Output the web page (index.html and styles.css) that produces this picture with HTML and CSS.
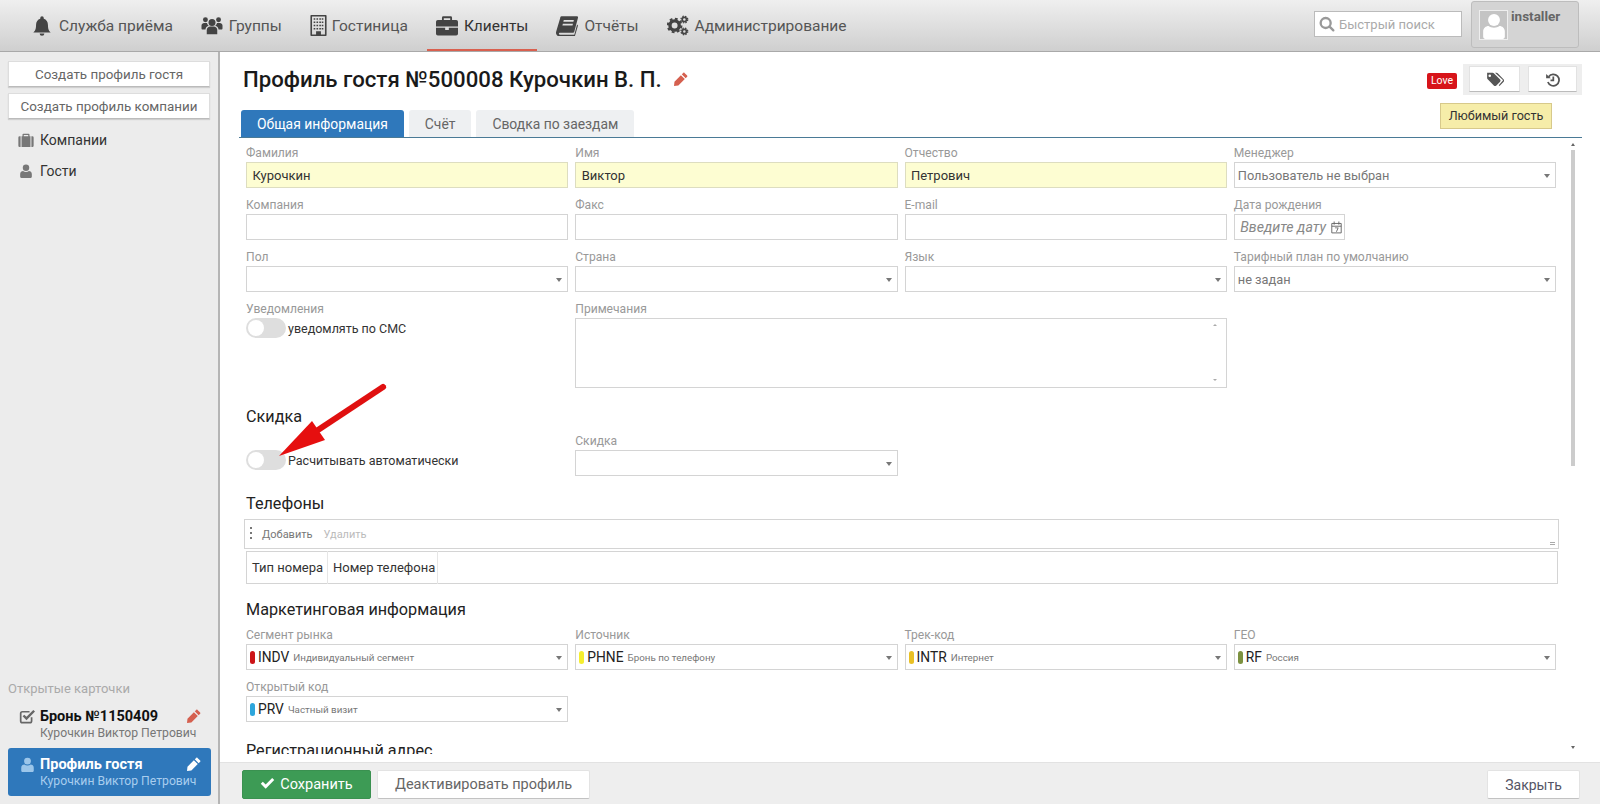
FILE: index.html
```html
<!DOCTYPE html>
<html lang="ru">
<head>
<meta charset="utf-8">
<title>Профиль гостя</title>
<link rel="stylesheet" href="styles.css">
</head>
<body>
<svg class="sprite" width="0" height="0">
  <defs>
    <symbol id="i-bell" viewBox="0 0 24 24"><path d="M12 1.500a2 2 0 0 1 2 2v.9c3 .9 4.800 3.600 4.800 6.900 0 5 1.200 6.800 3.200 8.700H2c2-1.900 3.200-3.700 3.200-8.700 0-3.300 1.800-6 4.800-6.900v-.9a2 2 0 0 1 2-2zM9.300 21h5.400a2.700 2.700 0 0 1-5.400 0z"/></symbol>
    <symbol id="i-users" viewBox="0 0 24 24"><circle cx="12" cy="8.500" r="4"/><circle cx="4.500" cy="5.500" r="2.800"/><circle cx="19.500" cy="5.500" r="2.800"/><path d="M6 22v-5c0-2.500 2-4 4-4h4c2 0 4 1.500 4 4v5z"/><path d="M0 15v-3c0-2 1.500-3 3-3h3.300c.4 1.500 1.200 2.700 2.200 3.400C6 13 4.700 14.600 4.500 16.500H1c-.6 0-1-.6-1-1.500zM24 15v-3c0-2-1.500-3-3-3h-3.300c-.4 1.500-1.200 2.700-2.200 3.400 2.500.6 3.800 2.200 4 4.100H23c.6 0 1-.6 1-1.500z"/></symbol>
    <symbol id="i-building" viewBox="0 0 20 26"><path fill-rule="evenodd" d="M1 0h18a1 1 0 0 1 1 1v24a1 1 0 0 1-1 1H1a1 1 0 0 1-1-1V1a1 1 0 0 1 1-1zm1 2v22h5v-4h6v4h5V2z"/><path d="M4 4h2v2H4zM7.500 4h2v2h-2zM11 4h2v2h-2zM14 4h2v2h-2zM4 8h2v2H4zM7.500 8h2v2h-2zM11 8h2v2h-2zM14 8h2v2h-2zM4 12h2v2H4zM7.500 12h2v2h-2zM11 12h2v2h-2zM14 12h2v2h-2zM4 16h2v2H4zM7.500 16h2v2h-2zM11 16h2v2h-2zM14 16h2v2h-2z"/></symbol>
    <symbol id="i-case" viewBox="0 0 24 22"><path fill-rule="evenodd" d="M8 1h8a1.500 1.500 0 0 1 1.500 1.500V5H22a2 2 0 0 1 2 2v5H0V7a2 2 0 0 1 2-2h4.500V2.500A1.500 1.500 0 0 1 8 1zm.5 2v2h7V3z"/><path d="M0 13.500h10V16h4v-2.500h10V20a2 2 0 0 1-2 2H2a2 2 0 0 1-2-2z"/></symbol>
    <symbol id="i-book" viewBox="0 0 24 22"><path fill-rule="evenodd" d="M6 1h17c1 0 1.200.8 1 1.500l-4 15c-.3 1.200-1 1.500-2 1.500H4.500c-1 0-1.500.6-1.300 1.200.1.400.5.800 1.300.800H20l3-11 1 1-3.500 12H4C1.500 23 0 21 0 19c0-.6.100-1.200.3-1.800L4.500 3C4.800 1.800 5 1 6 1zm2.500 4l-.5 2h11l.5-2zm-1 4l-.5 2h11l.5-2z"/></symbol>
    <symbol id="i-cogs" viewBox="0 0 26 24"><circle cx="9" cy="12" r="5.500" fill="none" stroke="currentColor" stroke-width="4"/><circle cx="9" cy="12" r="8" fill="none" stroke="currentColor" stroke-width="2.500" stroke-dasharray="3.300 3"/><circle cx="20.500" cy="5" r="2.500" fill="none" stroke="currentColor" stroke-width="2"/><circle cx="20.500" cy="5" r="4" fill="none" stroke="currentColor" stroke-width="1.500" stroke-dasharray="1.700 1.500"/><circle cx="20.500" cy="19" r="2.500" fill="none" stroke="currentColor" stroke-width="2"/><circle cx="20.500" cy="19" r="4" fill="none" stroke="currentColor" stroke-width="1.500" stroke-dasharray="1.700 1.500"/></symbol>
    <symbol id="i-search" viewBox="0 0 24 24"><path fill="none" stroke="currentColor" stroke-width="3.500" stroke-linecap="round" d="M10 3a7.500 7.500 0 1 1 0 15 7.500 7.500 0 0 1 0-15zM15.500 15.500l6 6"/></symbol>
    <symbol id="i-user" viewBox="0 0 20 24"><circle cx="10" cy="6.500" r="5.500"/><path d="M0 22v-5c0-3 2.500-5 5-5 1.300 1 3 1.600 5 1.600s3.700-.6 5-1.600c2.500 0 5 2 5 5v5c0 1-.8 2-2 2H2c-1.200 0-2-1-2-2z"/></symbol>
    <symbol id="i-pencil" viewBox="0 0 24 24"><path d="M18 1.500l4.500 4.500c.7.700.7 1.500 0 2.200L20 10.700 13.300 4 15.800 1.500c.7-.7 1.500-.7 2.200 0zM11.800 5.500l6.700 6.700L7.500 23.200 0 24l.8-7.500z"/></symbol>
    <symbol id="i-tags" viewBox="0 0 24 20"><path d="M1.500 1h7.300c.6 0 1.200.3 1.600.7l8.400 8.400c.8.800.8 2 0 2.800l-5.300 5.300c-.8.800-2 .8-2.800 0L2.300 9.800C1.800 9.300 1.500 8.700 1.500 8zm3.500 2.200a1.700 1.700 0 1 0 0 3.400 1.700 1.700 0 0 0 0-3.400z" fill-rule="evenodd"/><path d="M12 1h2c.6 0 1.200.3 1.600.7l8 8.400c.6.800.6 2 0 2.800L18 18.500l-1-1 5.300-5.800c.4-.5.300-1-.1-1.500z"/></symbol>
    <symbol id="i-history" viewBox="0 0 24 24"><path fill="none" stroke="currentColor" stroke-width="2.800" d="M5 7.500A9.200 9.200 0 1 1 3.800 16M12.500 7v6.500H8"/><path d="M1 3l7.500 7H1z"/></symbol>
    <symbol id="i-check" viewBox="0 0 24 20"><path d="M9 19.500L.8 11.300l3.400-3.400L9 12.700 19.800 1.800l3.400 3.400z"/></symbol>
    <symbol id="i-checkbox" viewBox="0 0 24 22"><path fill="none" stroke="currentColor" stroke-width="2.500" d="M18 12v5.500c0 1.500-1 2.500-2.500 2.500h-11C3 20 2 19 2 17.500v-11C2 5 3 4 4.500 4H15"/><path d="M10.500 16.500L4.800 10.800l2.500-2.500 3.200 3.200L20.500 1.300 23 3.800z"/></symbol>
    <symbol id="i-briefcase-line" viewBox="0 0 24 22"><path d="M8 1h8a1.500 1.500 0 0 1 1.500 1.500V5H19v17H5V5h1.500V2.500A1.500 1.500 0 0 1 8 1zm.5 2v2h7V3zM3.500 5v17H2a2 2 0 0 1-2-2V7a2 2 0 0 1 2-2zM20.500 5H22a2 2 0 0 1 2 2v13a2 2 0 0 1-2 2h-1.500z" fill-rule="evenodd"/></symbol>
    <symbol id="i-calendar" viewBox="0 0 14 16"><path fill="none" stroke="currentColor" stroke-width="1.200" d="M1 3.500h12v12H1zM1 7h12M4 1v4M10 1v4"/><path d="M5 8.500h4.500v1L7.500 14h-1.200l2-4.300H5z"/></symbol>
  </defs>
</svg>

<header class="topbar">
  <nav class="nav">
    <a class="nav-item"><svg class="nav-icon"><use href="#i-bell"/></svg>Служба приёма</a>
    <a class="nav-item"><svg class="nav-icon"><use href="#i-users"/></svg>Группы</a>
    <a class="nav-item"><svg class="nav-icon nav-icon-narrow"><use href="#i-building"/></svg>Гостиница</a>
    <a class="nav-item is-active"><svg class="nav-icon"><use href="#i-case"/></svg>Клиенты</a>
    <a class="nav-item"><svg class="nav-icon"><use href="#i-book"/></svg>Отчёты</a>
    <a class="nav-item"><svg class="nav-icon"><use href="#i-cogs"/></svg>Администрирование</a>
  </nav>
  <div class="quick-search"><svg class="search-icon"><use href="#i-search"/></svg>Быстрый поиск</div>
  <div class="user-box">
    <div class="avatar"><svg class="avatar-icon"><use href="#i-user"/></svg></div>
    <span class="user-name">installer</span>
  </div>
</header>

<div class="workspace">
  <aside class="sidebar">
    <button class="side-btn">Создать профиль гостя</button>
    <button class="side-btn">Создать профиль компании</button>
    <ul class="side-menu">
      <li class="side-link"><svg class="side-icon"><use href="#i-briefcase-line"/></svg>Компании</li>
      <li class="side-link"><svg class="side-icon"><use href="#i-user"/></svg>Гости</li>
    </ul>
    <div class="open-title">Открытые карточки</div>
    <div class="card">
      <svg class="card-icon"><use href="#i-checkbox"/></svg>
      <div class="card-body">
        <div class="card-name">Бронь №1150409</div>
        <div class="card-sub">Курочкин Виктор Петрович</div>
      </div>
      <svg class="card-edit"><use href="#i-pencil"/></svg>
    </div>
    <div class="card is-current">
      <svg class="card-icon"><use href="#i-user"/></svg>
      <div class="card-body">
        <div class="card-name">Профиль гостя</div>
        <div class="card-sub">Курочкин Виктор Петрович</div>
      </div>
      <svg class="card-edit"><use href="#i-pencil"/></svg>
    </div>
  </aside>

  <main class="main">
    <div class="head">
      <h1 class="title">Профиль гостя №500008 Курочкин В. П.<svg class="title-edit"><use href="#i-pencil"/></svg></h1>
      <div class="head-tools">
        <span class="love">Love</span>
        <div class="tool-group">
          <button class="tool-btn tool-tags"><svg class="tool-icon"><use href="#i-tags"/></svg></button>
          <button class="tool-btn tool-hist"><svg class="tool-icon hist"><use href="#i-history"/></svg></button>
        </div>
      </div>
      <div class="tooltip">Любимый гость</div>
    </div>

    <div class="tabs">
      <a class="tab is-active">Общая информация</a>
      <a class="tab">Счёт</a>
      <a class="tab">Сводка по заездам</a>
    </div>

    <div class="scroll">
      <div class="form">
        <div class="grid">
          <div class="field"><label class="lbl">Фамилия</label><div class="ctl req">Курочкин</div></div>
          <div class="field"><label class="lbl">Имя</label><div class="ctl req">Виктор</div></div>
          <div class="field"><label class="lbl">Отчество</label><div class="ctl req">Петрович</div></div>
          <div class="field"><label class="lbl">Менеджер</label><div class="ctl sel muted">Пользователь не выбран<i class="caret"></i></div></div>

          <div class="field"><label class="lbl">Компания</label><div class="ctl"></div></div>
          <div class="field"><label class="lbl">Факс</label><div class="ctl"></div></div>
          <div class="field"><label class="lbl">E-mail</label><div class="ctl"></div></div>
          <div class="field"><label class="lbl">Дата рождения</label><div class="ctl date"><em class="ph">Введите дату</em><svg class="cal"><use href="#i-calendar"/></svg></div></div>

          <div class="field"><label class="lbl">Пол</label><div class="ctl sel"><i class="caret"></i></div></div>
          <div class="field"><label class="lbl">Страна</label><div class="ctl sel"><i class="caret"></i></div></div>
          <div class="field"><label class="lbl">Язык</label><div class="ctl sel"><i class="caret"></i></div></div>
          <div class="field"><label class="lbl">Тарифный план по умолчанию</label><div class="ctl sel muted">не задан<i class="caret"></i></div></div>

          <div class="field"><label class="lbl">Уведомления</label><div class="switch-row"><span class="switch"></span>уведомлять по СМС</div></div>
          <div class="field span2"><label class="lbl">Примечания</label><div class="ctl area"><i class="tick up"></i><i class="tick down"></i></div></div>
        </div>

        <h2 class="sect sect-first">Скидка</h2>
        <div class="grid">
          <div class="field"><div class="switch-row at-input"><span class="switch"></span>Расчитывать автоматически</div></div>
          <div class="field"><label class="lbl">Скидка</label><div class="ctl sel"><i class="caret"></i></div></div>
        </div>

        <h2 class="sect sect-phones">Телефоны</h2>
        <div class="toolbar">
          <span class="grip"></span>
          <span class="tb-item">Добавить</span>
          <span class="tb-item off">Удалить</span>
          <span class="tb-end"></span>
        </div>
        <table class="phones">
          <tr><th class="col-a">Тип номера</th><th class="col-b">Номер телефона</th><th></th></tr>
        </table>

        <h2 class="sect sect-mkt">Маркетинговая информация</h2>
        <div class="grid">
          <div class="field"><label class="lbl">Сегмент рынка</label><div class="ctl sel code"><b class="pill c-red"></b><span class="cd">INDV</span><span class="desc">Индивидуальный сегмент</span><i class="caret"></i></div></div>
          <div class="field"><label class="lbl">Источник</label><div class="ctl sel code"><b class="pill c-yel"></b><span class="cd">PHNE</span><span class="desc">Бронь по телефону</span><i class="caret"></i></div></div>
          <div class="field"><label class="lbl">Трек-код</label><div class="ctl sel code"><b class="pill c-gold"></b><span class="cd">INTR</span><span class="desc">Интернет</span><i class="caret"></i></div></div>
          <div class="field"><label class="lbl">ГЕО</label><div class="ctl sel code"><b class="pill c-olive"></b><span class="cd">RF</span><span class="desc">Россия</span><i class="caret"></i></div></div>
          <div class="field"><label class="lbl">Открытый код</label><div class="ctl sel code"><b class="pill c-blue"></b><span class="cd">PRV</span><span class="desc">Частный визит</span><i class="caret"></i></div></div>
        </div>

        <h2 class="sect sect-addr">Регистрационный адрес</h2>
      </div>
      <div class="rail">
        <i class="rail-up"></i>
        <span class="rail-thumb"></span>
        <i class="rail-down"></i>
      </div>
    </div>

    <footer class="footer">
      <button class="btn btn-save"><svg class="btn-check"><use href="#i-check"/></svg>Сохранить</button>
      <button class="btn">Деактивировать профиль</button>
      <button class="btn btn-close">Закрыть</button>
    </footer>

    <svg class="pointer" width="120" height="90" viewBox="0 0 120 90">
      <path d="M106 4L41 47" stroke="#e01010" stroke-width="6" stroke-linecap="round" fill="none"/>
      <path d="M2 73L35 38 48 57z" fill="#e60f0f"/>
    </svg>
  </main>
</div>
</body>
</html>
```

FILE: styles.css
```css
* { box-sizing: border-box; }
html, body { margin: 0; height: 100%; }
body {
  display: flex;
  flex-direction: column;
  height: 804px;
  overflow: hidden;
  font-family: Roboto, "Noto Sans", sans-serif;
  font-size: 14px;
  color: #333;
  background: #fff;
}
.sprite { position: absolute; }
svg { fill: currentColor; }

/* top bar */
.topbar {
  flex: none;
  display: flex;
  align-items: flex-start;
  height: 52px;
  padding-right: 21px;
  background: linear-gradient(#efefef, #cfcfcf);
  border-bottom: 1px solid #a9a9a9;
}
.nav { display: flex; flex: 1; padding-left: 22px; height: 51px; }
.nav-item {
  display: flex;
  align-items: center;
  height: 51px;
  padding: 0 9px;
  margin-right: 10px;
  font-size: 15.500px;
  color: #555;
  white-space: nowrap;
}
.nav-item.is-active { color: #333; border-bottom: 2px solid #d9604f; padding-top: 2px; }
.nav-icon { width: 22px; height: 21px; margin-right: 6px; color: #444; }
.nav-icon-narrow { width: 17px; margin-right: 5px; }
.quick-search {
  display: flex;
  align-items: center;
  width: 148px;
  height: 26px;
  margin-top: 11px;
  padding-left: 4px;
  background: #fff;
  border: 1px solid #bbb;
  font-size: 13px;
  color: #aaa;
}
.search-icon { width: 16px; height: 16px; margin-right: 4px; color: #999; }
.user-box {
  display: flex;
  align-items: flex-start;
  width: 108px;
  height: 47px;
  margin: 1px 0 0 9px;
  padding: 8px 0 0 7px;
  background: #d4d4d4;
  border: 1px solid #bdbdbd;
  border-radius: 3px;
}
.avatar {
  display: flex;
  justify-content: center;
  align-items: flex-end;
  width: 29px;
  height: 30px;
  background: #c4c4c4;
  border: 1px solid #eee;
  overflow: hidden;
}
.avatar-icon { width: 24px; height: 26px; color: #fff; }
.user-name { margin-left: 3px; font-weight: 700; font-size: 13.500px; color: #666; line-height: 13px; }

.workspace { flex: 1; display: flex; min-height: 0; position: relative; }

/* sidebar */
.sidebar {
  flex: none;
  display: flex;
  flex-direction: column;
  width: 220px;
  padding: 9px 8px 8px 8px;
  background: #ececec;
  border-right: 2px solid #b5b5b5;
}
.side-btn {
  display: block;
  width: 202px;
  height: 26px;
  margin-bottom: 6px;
  padding: 0;
  font: inherit;
  font-size: 13.400px;
  color: #666;
  background: #fff;
  border: 1px solid #ddd;
  border-bottom-color: #bbb;
  box-shadow: 0 1px 1px rgba(0,0,0,.12);
}
.side-menu { list-style: none; margin: -1px 0 auto; padding: 0; }
.side-link { display: flex; align-items: center; height: 31px; color: #333; }
.side-icon { width: 16px; height: 14px; margin: 0 6px 0 10px; color: #777; }
.open-title { margin-bottom: 2px; font-size: 13px; color: #aaa; line-height: 18px; }
.card {
  display: flex;
  align-items: flex-start;
  height: 48px;
  width: 203px;
  padding: 8px 10px 0 11px;
  border-radius: 3px;
}
.card-icon { flex: none; width: 17px; height: 15px; margin: 1px 4px 0 0; color: #666; }
.card-body { flex: 1; min-width: 0; }
.card-name { font-weight: 700; font-size: 14.500px; line-height: 17px; color: #111; white-space: nowrap; }
.card-sub { font-size: 12.200px; line-height: 17px; color: #777; white-space: nowrap; }
.card-edit { flex: none; width: 14px; height: 14px; margin-top: 1px; color: #d5604f; }
.card.is-current { background: #2f78bb; }
.is-current .card-icon { color: #9cc6ea; }
.is-current .card-name { color: #fff; }
.is-current .card-sub { color: #a8cdee; }
.is-current .card-edit { color: #fff; }

/* main */
.main { flex: 1; min-width: 0; display: flex; flex-direction: column; position: relative; }
.head { flex: none; display: flex; justify-content: space-between; height: 58px; padding: 12px 18px 0 24px; position: relative; }
.title { margin: 0 0 0 -1px; display: flex; align-items: center; height: 30px; font-size: 22.200px; font-weight: 500; color: #1a1a1a; }
.title-edit { width: 14px; height: 14px; margin-left: 12px; color: #d5604f; }
.head-tools { display: flex; align-items: center; height: 31px; }
.love {
  width: 30px; height: 16px; margin: 2px 6px 0 0;
  font-size: 10.500px; line-height: 16px; text-align: center;
  color: #fff; background: #d7141a; border-radius: 2px;
}
.tool-group { display: flex; gap: 8px; height: 31px; padding: 2px 5px 0 6px; background: #eee; }
.tool-btn { height: 26px; padding: 0; background: #fff; border: 1px solid #e2e2e2; border-bottom-color: #bbb; color: #555; }
.tool-tags { width: 51px; }
.tool-hist { width: 49px; }
.tool-icon { display: block; width: 18px; height: 15px; margin: auto; }
.tooltip {
  position: absolute;
  top: 51px;
  right: 48px;
  width: 112px;
  height: 26px;
  font-size: 12.600px;
  line-height: 24px;
  text-align: center;
  color: #333;
  background: #f6eda9;
  border: 1px solid #d7c98b;
}
.tabs {
  flex: none;
  display: flex;
  gap: 5px;
  height: 28px;
  margin: 0 18px 0 19px;
  padding-left: 2px;
  border-bottom: 1px solid #4a7a96;
}
.tab {
  height: 27px;
  padding: 0 16px;
  font-size: 13.900px;
  line-height: 28px;
  color: #666;
  background: #eef0f2;
  border-radius: 3px 3px 0 0;
}
.tab.is-active { color: #fff; background: #2f78bb; }

.scroll { flex: 1; min-height: 0; display: flex; overflow: hidden; margin-bottom: 8px; }
.form { flex: 1; min-width: 0; padding: 6px 8px 0 26px; }
.grid { display: grid; grid-template-columns: repeat(4, 1fr); gap: 8px 7px; }
.field { min-width: 0; }
.span2 { grid-column: span 2; }
.lbl { display: block; height: 18px; font-size: 12.100px; line-height: 18px; color: #999; white-space: nowrap; }
.ctl {
  position: relative;
  display: flex;
  align-items: center;
  height: 26px;
  padding: 0 5.500px;
  font-size: 13px;
  color: #333;
  background: #fff;
  border: 1px solid #d4d4d4;
  white-space: nowrap;
}
.ctl.req { background: #fdfdd2; border-color: #ddddc0; }
.ctl.muted { padding-left: 3px; font-size: 12.800px; color: #777; }
.caret {
  position: absolute;
  right: 5px;
  top: 11px;
  border: 3.500px solid transparent;
  border-top: 4px solid #777;
  border-bottom: 0;
}
.date { width: 111px; padding-right: 0; }
.ph { color: #888; font-size: 14.200px; }
.cal { width: 11px; height: 14px; margin-left: 5px; flex: none; color: #666; }
.area { height: 70px; }
.tick { position: absolute; right: 9px; border: 2px solid transparent; }
.tick.up { top: 5px; border-top: 0; border-bottom: 2px solid #aaa; }
.tick.down { bottom: 6px; border-bottom: 0; border-top: 2px solid #aaa; }
.switch-row { display: flex; align-items: center; gap: 2px; height: 20px; font-size: 12.500px; color: #333; }
.switch-row.at-input { margin-top: 18px; }
.switch { position: relative; display: block; width: 40px; height: 20px; background: #dedede; border-radius: 10px; }
.switch::after { content: ""; position: absolute; left: 2px; top: 2px; width: 16px; height: 16px; background: #fff; border-radius: 50%; }
.sect { margin: 16px 0 6px; height: 22px; font-size: 16.200px; line-height: 22px; font-weight: 400; color: #222; white-space: nowrap; }
.sect-first { margin: 18px 0 4px; }
.sect-phones { margin: 17px 0 4px; }
.toolbar {
  position: relative;
  display: flex;
  align-items: center;
  height: 30px;
  margin: 0 -3px 0 -2px;
  padding-left: 5px;
  border: 1px solid #d4d4d4;
}
.grip { width: 2px; height: 14px; margin-right: 10px; background: repeating-linear-gradient(#777 0 2px, transparent 2px 5px); }
.tb-item { margin-right: 11px; font-size: 11px; color: #777; }
.tb-item.off { color: #bbb; }
.tb-end { position: absolute; right: 3px; bottom: 3px; width: 5px; height: 3px; border-top: 1px solid #aaa; border-bottom: 1px solid #aaa; }
.phones {
  width: calc(100% + 2px);
  height: 33px;
  margin: 2px 0 0 0;
  border-collapse: collapse;
  border: 1px solid #d4d4d4;
}
.phones th { padding: 0; font-weight: 400; font-size: 13px; color: #333; text-align: left; white-space: nowrap; }
.col-a { width: 81px; padding-left: 5px !important; border-right: 1px solid #e6e6e6; }
.col-b { width: 110px; padding-left: 5px !important; border-right: 1px solid #e6e6e6; }
.sect-mkt { margin: 15px 0 5px; }
.sect-addr { margin-top: 18px; }
.code { padding-left: 3px; }
.pill { flex: none; width: 5px; height: 13px; margin-right: 3px; border-radius: 3px; }
.c-red { background: #cc1417; }
.c-yel { background: #f5ee2f; }
.c-gold { background: #e9c024; }
.c-olive { background: #7c9140; }
.c-blue { background: #2ea6dc; }
.cd { font-size: 13.800px; color: #222; }
.desc { margin-left: 4px; font-size: 9.800px; color: #777; }

.rail { flex: none; display: flex; flex-direction: column; width: 36px; padding: 5px 0 0 7px; }
.rail-up { width: 0; border: 2.500px solid transparent; border-top: 0; border-bottom: 3px solid #666; }
.rail-thumb { display: block; width: 4px; height: 316px; margin-top: 4px; background: #ccc; }
.rail-down { width: 0; margin-top: auto; margin-bottom: 5px; border: 2.500px solid transparent; border-bottom: 0; border-top: 3px solid #666; }

.footer {
  flex: none;
  display: flex;
  gap: 6px;
  height: 42px;
  padding: 7px 20px 0 22px;
  background: #eee;
  border-top: 1px solid #e2e2e2;
}
.btn {
  height: 29px;
  padding: 0 17px;
  font: inherit;
  font-size: 14.500px;
  color: #666;
  background: #fff;
  border: 1px solid #e3e3e3;
  border-bottom-color: #c2c2c2;
  border-radius: 2px;
  white-space: nowrap;
}
.btn-save { width: 129px; padding: 0; color: #fff; background: #3d9b55; border-color: #3a9150; }
.btn-check { width: 15px; height: 12px; margin-right: 5px; }
.btn-close { width: 93px; margin-left: auto; padding: 0; color: #556; font-size: 14px; }
.pointer { position: absolute; left: 57px; top: 331px; pointer-events: none; }
```
